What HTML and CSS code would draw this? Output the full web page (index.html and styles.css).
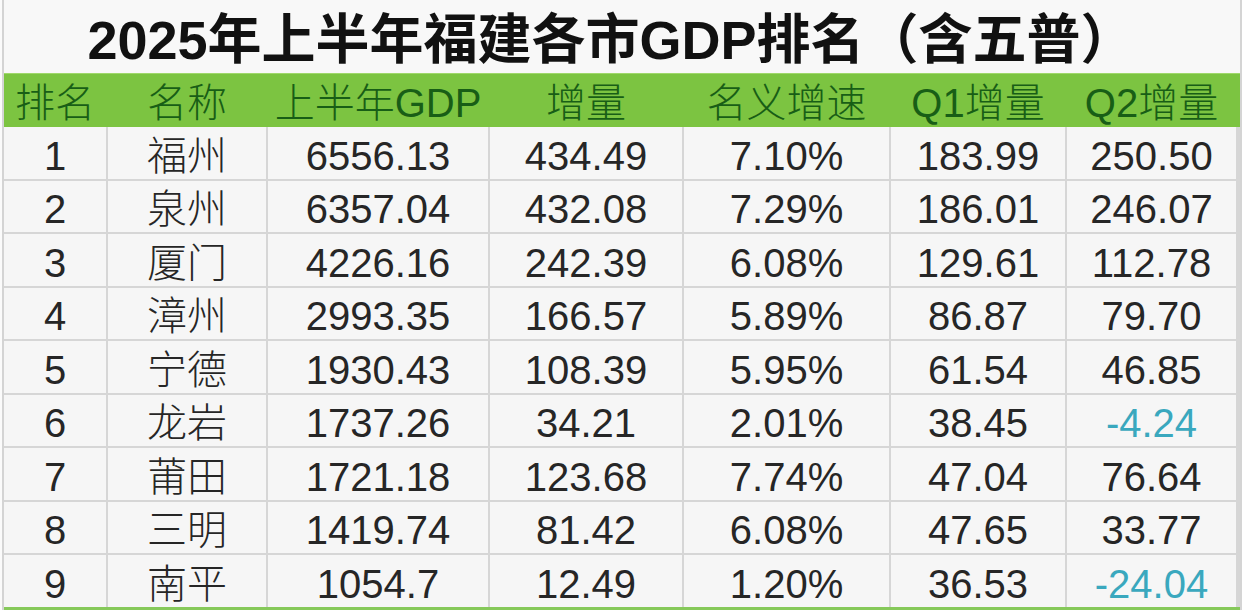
FILE: index.html
```html
<!DOCTYPE html>
<html lang="zh-CN">
<head>
<meta charset="utf-8">
<title>2025年上半年福建各市GDP排名</title>
<link rel="stylesheet" href="styles.css">
</head>
<body>
<div class="sheet">
  <div class="title">2025年上半年福建各市GDP排名（含五普）</div>
  <div class="head cols">
    <div>排名</div><div>名称</div><div>上半年GDP</div><div>增量</div><div>名义增速</div><div>Q1增量</div><div>Q2增量</div>
  </div>
  <div class="body cols">
    <div>1</div><div>福州</div><div>6556.13</div><div>434.49</div><div>7.10%</div><div>183.99</div><div>250.50</div>
    <div>2</div><div>泉州</div><div>6357.04</div><div>432.08</div><div>7.29%</div><div>186.01</div><div>246.07</div>
    <div>3</div><div>厦门</div><div>4226.16</div><div>242.39</div><div>6.08%</div><div>129.61</div><div>112.78</div>
    <div>4</div><div>漳州</div><div>2993.35</div><div>166.57</div><div>5.89%</div><div>86.87</div><div>79.70</div>
    <div>5</div><div>宁德</div><div>1930.43</div><div>108.39</div><div>5.95%</div><div>61.54</div><div>46.85</div>
    <div>6</div><div>龙岩</div><div>1737.26</div><div>34.21</div><div>2.01%</div><div>38.45</div><div class="neg">-4.24</div>
    <div>7</div><div>莆田</div><div>1721.18</div><div>123.68</div><div>7.74%</div><div>47.04</div><div>76.64</div>
    <div>8</div><div>三明</div><div>1419.74</div><div>81.42</div><div>6.08%</div><div>47.65</div><div>33.77</div>
    <div>9</div><div>南平</div><div>1054.7</div><div>12.49</div><div>1.20%</div><div>36.53</div><div class="neg">-24.04</div>
  </div>
  <div class="foot"></div>
</div>
</body>
</html>
```
FILE: styles.css
```css
html, body {
  margin: 0;
  padding: 0;
  background: #fbfbfb;
}
body {
  width: 1242px;
  height: 610px;
  overflow: hidden;
  font-family: "Liberation Sans", "Noto Sans CJK SC", sans-serif;
}
.sheet {
  margin-left: 2px;
  width: 1236px;
  border-left: 2px solid #d4d4d4;
  border-right: 2px solid #d4d4d4;
  background: #d6d6d6;
}
.title {
  height: 73px;
  background: #f8f8f8;
  display: flex;
  align-items: center;
  justify-content: center;
  padding-right: 22px;
  box-sizing: border-box;
  font-size: 54px;
  font-weight: bold;
  color: #111;
  line-height: 1;
  padding-top: 6px;
}
.cols {
  display: grid;
  grid-template-columns: 102px 158px 220px 192px 205px 174px 169px;
  column-gap: 2px;
}
.head {
  height: 54px;
  background: #7cc441;
  border-top: 1px solid #9fd86a;
  box-sizing: border-box;
}
.head > div {
  display: flex;
  align-items: center;
  justify-content: center;
  font-size: 40px;
  font-weight: 300;
  color: #185e16;
  line-height: 1;
  padding-top: 4px;
}
.body {
  row-gap: 2px;
  grid-auto-rows: 51.5px;
  background: #d6d6d6;
}
.body > div {
  background: #f6f6f6;
  display: flex;
  align-items: center;
  justify-content: center;
  font-size: 40px;
  font-weight: 300;
  color: #262626;
  line-height: 1;
  padding-top: 6px;
  box-sizing: border-box;
}
.body > .neg {
  color: #3aa8be;
}
.foot {
  height: 6px;
  background: #86c95a;
}
```
